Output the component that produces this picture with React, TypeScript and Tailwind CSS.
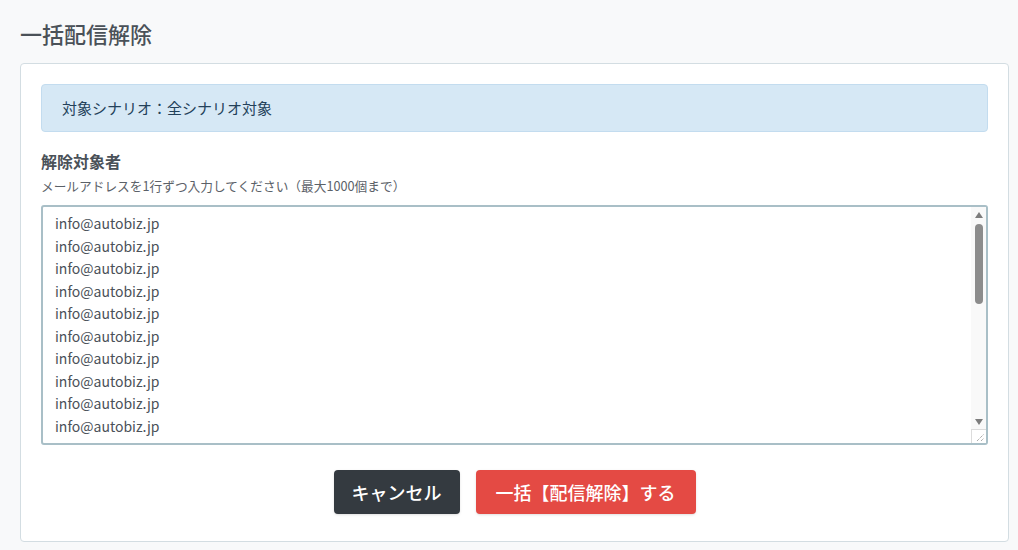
import React from 'react';

const emails = Array.from({ length: 10 }, () => 'info@autobiz.jp').join('\n');

export default function App() {
  return (
    <div className="min-h-[550px] bg-[#f8f9fa] pl-5 pr-[9px] pt-[18px] pb-2" style={{ fontFamily: '"Noto Sans CJK JP", "Noto Sans", sans-serif' }}>
      <h1 className="text-[22px] leading-[30px] font-medium text-[#4a5158] mb-[15px]">一括配信解除</h1>

      <div className="bg-white border border-[#d3dde2] rounded-[4px] px-[20px] pt-[20px] pb-[27px]">
        <div className="h-[48px] flex items-center px-[20px] bg-[#d6e8f5] border border-[#c3dcef] rounded-[4px] text-[15px] text-[#23415a]">
          対象シナリオ：全シナリオ対象
        </div>

        <div className="mt-[19px] text-[16px] font-bold leading-[20px] text-[#4a5158]">解除対象者</div>
        <div className="mt-[6px] text-[12.7px] leading-[18px] text-[#5b6168]">メールアドレスを1行ずつ入力してください（最大1000個まで）</div>

        <div className="relative mt-[10px]">
          <textarea
            readOnly
            defaultValue={emails}
            className="block w-full h-[240px] border-2 border-[#a9bfc7] rounded-[3px] pl-[12px] pr-[20px] pt-[5px] pb-[6px] text-[14px] leading-[22.5px] text-[#4a5158] outline-none overflow-hidden resize-none"
            style={{ fontFamily: '"Noto Sans CJK JP", "Noto Sans", sans-serif' }}
          />
          {/* scrollbar */}
          <div className="absolute right-[2px] top-[2px] bottom-[2px] w-[15px] bg-[#f9f9f9] flex flex-col items-center">
            <div className="h-[15px] flex items-center justify-center">
              <div className="w-0 h-0 border-l-[4.5px] border-r-[4.5px] border-b-[6px] border-l-transparent border-r-transparent border-b-[#7d7d7d]" />
            </div>
            <div className="mt-[2px] w-[8px] h-[80px] rounded-full bg-[#8c8c8c]" />
            <div className="flex-1" />
            <div className="h-[15px] flex items-center justify-center">
              <div className="w-0 h-0 border-l-[4.5px] border-r-[4.5px] border-t-[6px] border-l-transparent border-r-transparent border-t-[#7d7d7d]" />
            </div>
            <div className="w-[15px] h-[14px] bg-white border-l border-t border-[#dcdcdc] flex items-end justify-end p-[2px]">
              <svg width="8" height="8" viewBox="0 0 8 8">
                <line x1="1" y1="8" x2="8" y2="1" stroke="#6b6b6b" strokeWidth="0.8" strokeDasharray="1 1" />
                <line x1="5" y1="8" x2="8" y2="5" stroke="#6b6b6b" strokeWidth="0.8" strokeDasharray="1 1" />
              </svg>
            </div>
          </div>
        </div>

        <div className="mt-[25px] flex justify-center gap-[16px]">
          <button className="h-[44px] px-[18px] rounded-[4px] bg-[#343a40] text-white text-[18px] font-medium shadow-sm">キャンセル</button>
          <button className="h-[44px] px-[20px] rounded-[4px] bg-[#e44a44] text-white text-[18px] font-medium shadow-sm">一括【配信解除】する</button>
        </div>
      </div>
    </div>
  );
}
